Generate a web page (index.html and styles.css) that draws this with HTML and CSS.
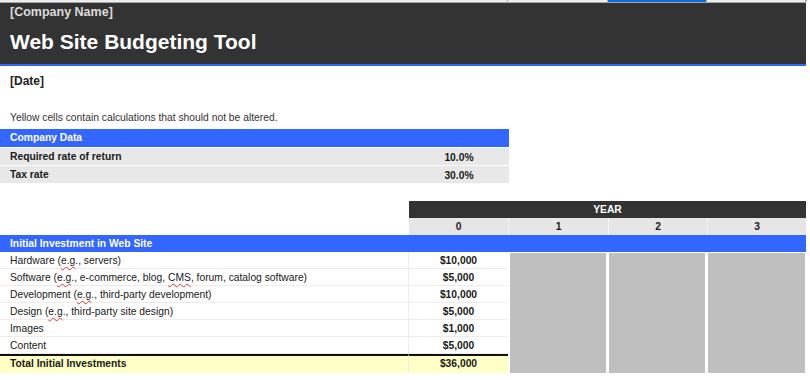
FILE: index.html
```html
<!DOCTYPE html>
<html lang="en">
<head>
  <meta charset="UTF-8">
  <meta name="viewport" content="width=device-width, initial-scale=1.0">
  <link rel="stylesheet" href="styles.css">
</head>
<body>
  <div class="sheet">
    <div class="tabs">
      <span></span>
      <span></span>
      <span class="active"></span>
      <span></span>
      <span></span>
    </div>

    <header class="banner">
      <div class="company">[Company Name]</div>
      <h1 class="title">Web Site Budgeting Tool</h1>
    </header>

    <div class="date">[Date]</div>
    <p class="note">Yellow cells contain calculations that should not be altered.</p>

    <section class="company-data">
      <div class="section-title">Company Data</div>
      <div class="label">Required rate of return</div>
      <div class="num">10.0%</div>
      <div class="label">Tax rate</div>
      <div class="num">30.0%</div>
    </section>

    <section class="invest">
      <div class="year-head">YEAR</div>
      <div class="year-num y0">0</div>
      <div class="year-num y1">1</div>
      <div class="year-num y2">2</div>
      <div class="year-num y3">3</div>

      <div class="section-title wide">Initial Investment in Web Site</div>

      <div class="lines">
        <div class="item">Hardware (<span class="spell">e.g</span>., servers)</div>
        <div class="amount">$10,000</div>
        <div class="item">Software (<span class="spell">e.g</span>., e-commerce, blog, <span class="spell">CMS</span>, forum, catalog software)</div>
        <div class="amount">$5,000</div>
        <div class="item">Development (<span class="spell">e.g</span>., third-party development)</div>
        <div class="amount">$10,000</div>
        <div class="item">Design (<span class="spell">e.g</span>., third-party site design)</div>
        <div class="amount">$5,000</div>
        <div class="item">Images</div>
        <div class="amount">$1,000</div>
        <div class="item">Content</div>
        <div class="amount">$5,000</div>
        <div class="item total">Total Initial Investments</div>
        <div class="amount total">$36,000</div>
      </div>

      <div class="blank c1"></div>
      <div class="blank c2"></div>
      <div class="blank c3"></div>
    </section>
  </div>
</body>
</html>
```

FILE: styles.css
```css
body {
  margin: 0;
  padding: 0;
  background-color: white;
  font-family: "Liberation Sans", Arial, sans-serif;
  font-size: 10.3px;
  color: #1a1a1a;
}

.sheet {
  width: 806px;
}

/* thin tab strip along the top */
.tabs {
  display: grid;
  grid-template-columns: 508px 100px 99px 99px 1fr;
  height: 2px;
  border-bottom: 1px solid #a6a6a6;
  background-color: #ececec;
}

.tabs span {
  border-right: 1px solid #b0b0b0;
}

.tabs span.active {
  background-color: #0a6fd6;
}

.banner {
  height: 63px;
  box-sizing: border-box;
  background-color: #333333;
  border-bottom: 2px solid #3366ff;
  padding-left: 10px;
}

.company {
  font-size: 12.5px;
  font-weight: bold;
  line-height: 18px;
  color: #dcdcdc;
}

.title {
  margin: 8px 0 0 0;
  font-size: 21px;
  line-height: 26px;
  font-weight: bold;
  color: white;
}

.date {
  margin-top: 7px;
  padding-left: 10px;
  font-size: 12px;
  font-weight: bold;
  line-height: 16px;
  color: #222;
}

.note {
  margin: 22px 0 0 0;
  padding-left: 10px;
  line-height: 14px;
  color: #333;
}

.section-title {
  background-color: #3366ff;
  color: white;
  font-weight: bold;
  padding-left: 10px;
  line-height: 18px;
}

.company-data {
  margin-top: 4px;
  width: 509px;
  display: grid;
  grid-template-columns: 409px 100px;
  grid-auto-rows: 18px;
}

.company-data .section-title {
  grid-column: 1 / 3;
}

.company-data .label,
.company-data .num {
  background-color: #e8e8e8;
  border-top: 1px solid white;
  font-weight: bold;
  line-height: 17px;
}

.company-data .label {
  padding-left: 10px;
}

.company-data .num {
  text-align: center;
  padding-top: 2px;
  line-height: 15px;
}

/* investment block: label, year 0 .. 3 */
.invest {
  margin-top: 18px;
  display: grid;
  grid-template-columns: 409px 99px 100px 99px 99px;
  grid-template-rows: 17px 17px 17px auto;
}

.year-head {
  grid-column: 2 / 6;
  grid-row: 1;
  background-color: #333333;
  color: white;
  font-weight: bold;
  text-align: center;
  line-height: 17px;
}

.year-num {
  grid-row: 2;
  background-color: #e6e6e6;
  border-left: 1px solid #f6f6f6;
  font-weight: bold;
  text-align: center;
  line-height: 17px;
}

.year-num.y0 { grid-column: 2; border-left: none; }
.year-num.y1 { grid-column: 3; }
.year-num.y2 { grid-column: 4; }
.year-num.y3 { grid-column: 5; }

.invest .section-title.wide {
  grid-column: 1 / 6;
  grid-row: 3;
  line-height: 17px;
}

.lines {
  grid-column: 1 / 3;
  grid-row: 4;
  display: grid;
  grid-template-columns: 409px 99px;
  grid-template-rows: repeat(6, 17px) 19px;
}

.blank {
  grid-row: 4;
  background-color: #bfbfbf;
  margin: 1px 1px 0 1px;
}

.blank.c1 {
  grid-column: 3;
  margin-left: 2px;
  margin-right: 2px;
}

.blank.c2 {
  grid-column: 4;
  margin-right: 2px;
}

.blank.c3 {
  grid-column: 5;
}

.item,
.amount {
  border-bottom: 1px solid #ececec;
  line-height: 17px;
  box-sizing: border-box;
}

.item {
  padding-left: 10px;
  white-space: nowrap;
  border-right: 1px solid #ececec;
}

.amount {
  text-align: center;
  font-weight: bold;
}

.item.total,
.amount.total {
  background-color: #ffffc8;
  border-top: 2px solid #111;
  border-bottom: none;
  font-weight: bold;
  line-height: 16px;
}

.spell {
  text-decoration: underline wavy #e03a3a;
  text-decoration-thickness: 1px;
  text-underline-offset: 2px;
}
```
